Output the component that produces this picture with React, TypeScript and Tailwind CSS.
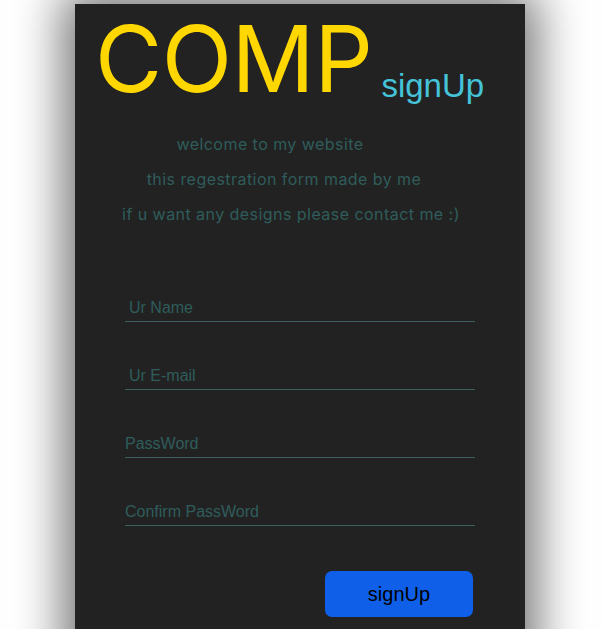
export default function App() {
  const fields = [
    { label: "Ur Name", indent: "pl-1", type: "text" },
    { label: "Ur E-mail", indent: "pl-1", type: "email" },
    { label: "PassWord", indent: "pl-0", type: "password" },
    { label: "Confirm PassWord", indent: "pl-0", type: "password" },
  ];

  return (
    <div className="w-[615px] h-[629px] overflow-hidden bg-white pt-1">
      <div className="ml-[75px] w-[450px] h-[700px] bg-[#222222] shadow-[0_0_45px_12px_rgba(0,0,0,0.55)]">
        {/* header */}
        <div className="flex items-end pl-[20px] pt-[10px]">
          <h1 className="font-['Inter',sans-serif] text-[92px] leading-[90px] text-[#ffd700] tracking-[-0.5px]">
            COMP
          </h1>
          <span className="ml-[9px] mb-[2px] font-['Liberation_Sans',Arial,sans-serif] text-[33px] leading-none text-[#45c3d9]">
            signUp
          </span>
        </div>

        {/* intro */}
        <div className="mt-[23px] flex flex-col items-center font-['Inter',sans-serif] text-[16px] leading-[35px] tracking-[0.45px] text-[#2f5d5b]">
          <p className="pr-[60px]">welcome to my website</p>
          <p className="pr-[32px]">this regestration form made by me</p>
          <p className="pr-[18px]">if u want any designs please contact me :)</p>
        </div>

        {/* form */}
        <form className="mt-[62px] ml-[50px] w-[350px] flex flex-col gap-[40px]">
          {fields.map((f) => (
            <input
              key={f.label}
              type={f.type}
              placeholder={f.label}
              className={`w-full h-[28px] bg-transparent border-b border-[#3a5f5d] outline-none font-['Liberation_Sans',Arial,sans-serif] text-[16px] text-[#2f5d5b] placeholder:text-[#2f5d5b] ${f.indent}`}
            />
          ))}
          <div className="flex justify-end mt-[5px] pr-[2px]">
            <button
              type="button"
              className="w-[148px] h-[46px] rounded-[7px] bg-[#0f5fe8] font-['Liberation_Sans',Arial,sans-serif] text-[20px] text-black"
            >
              signUp
            </button>
          </div>
        </form>
      </div>
    </div>
  );
}
